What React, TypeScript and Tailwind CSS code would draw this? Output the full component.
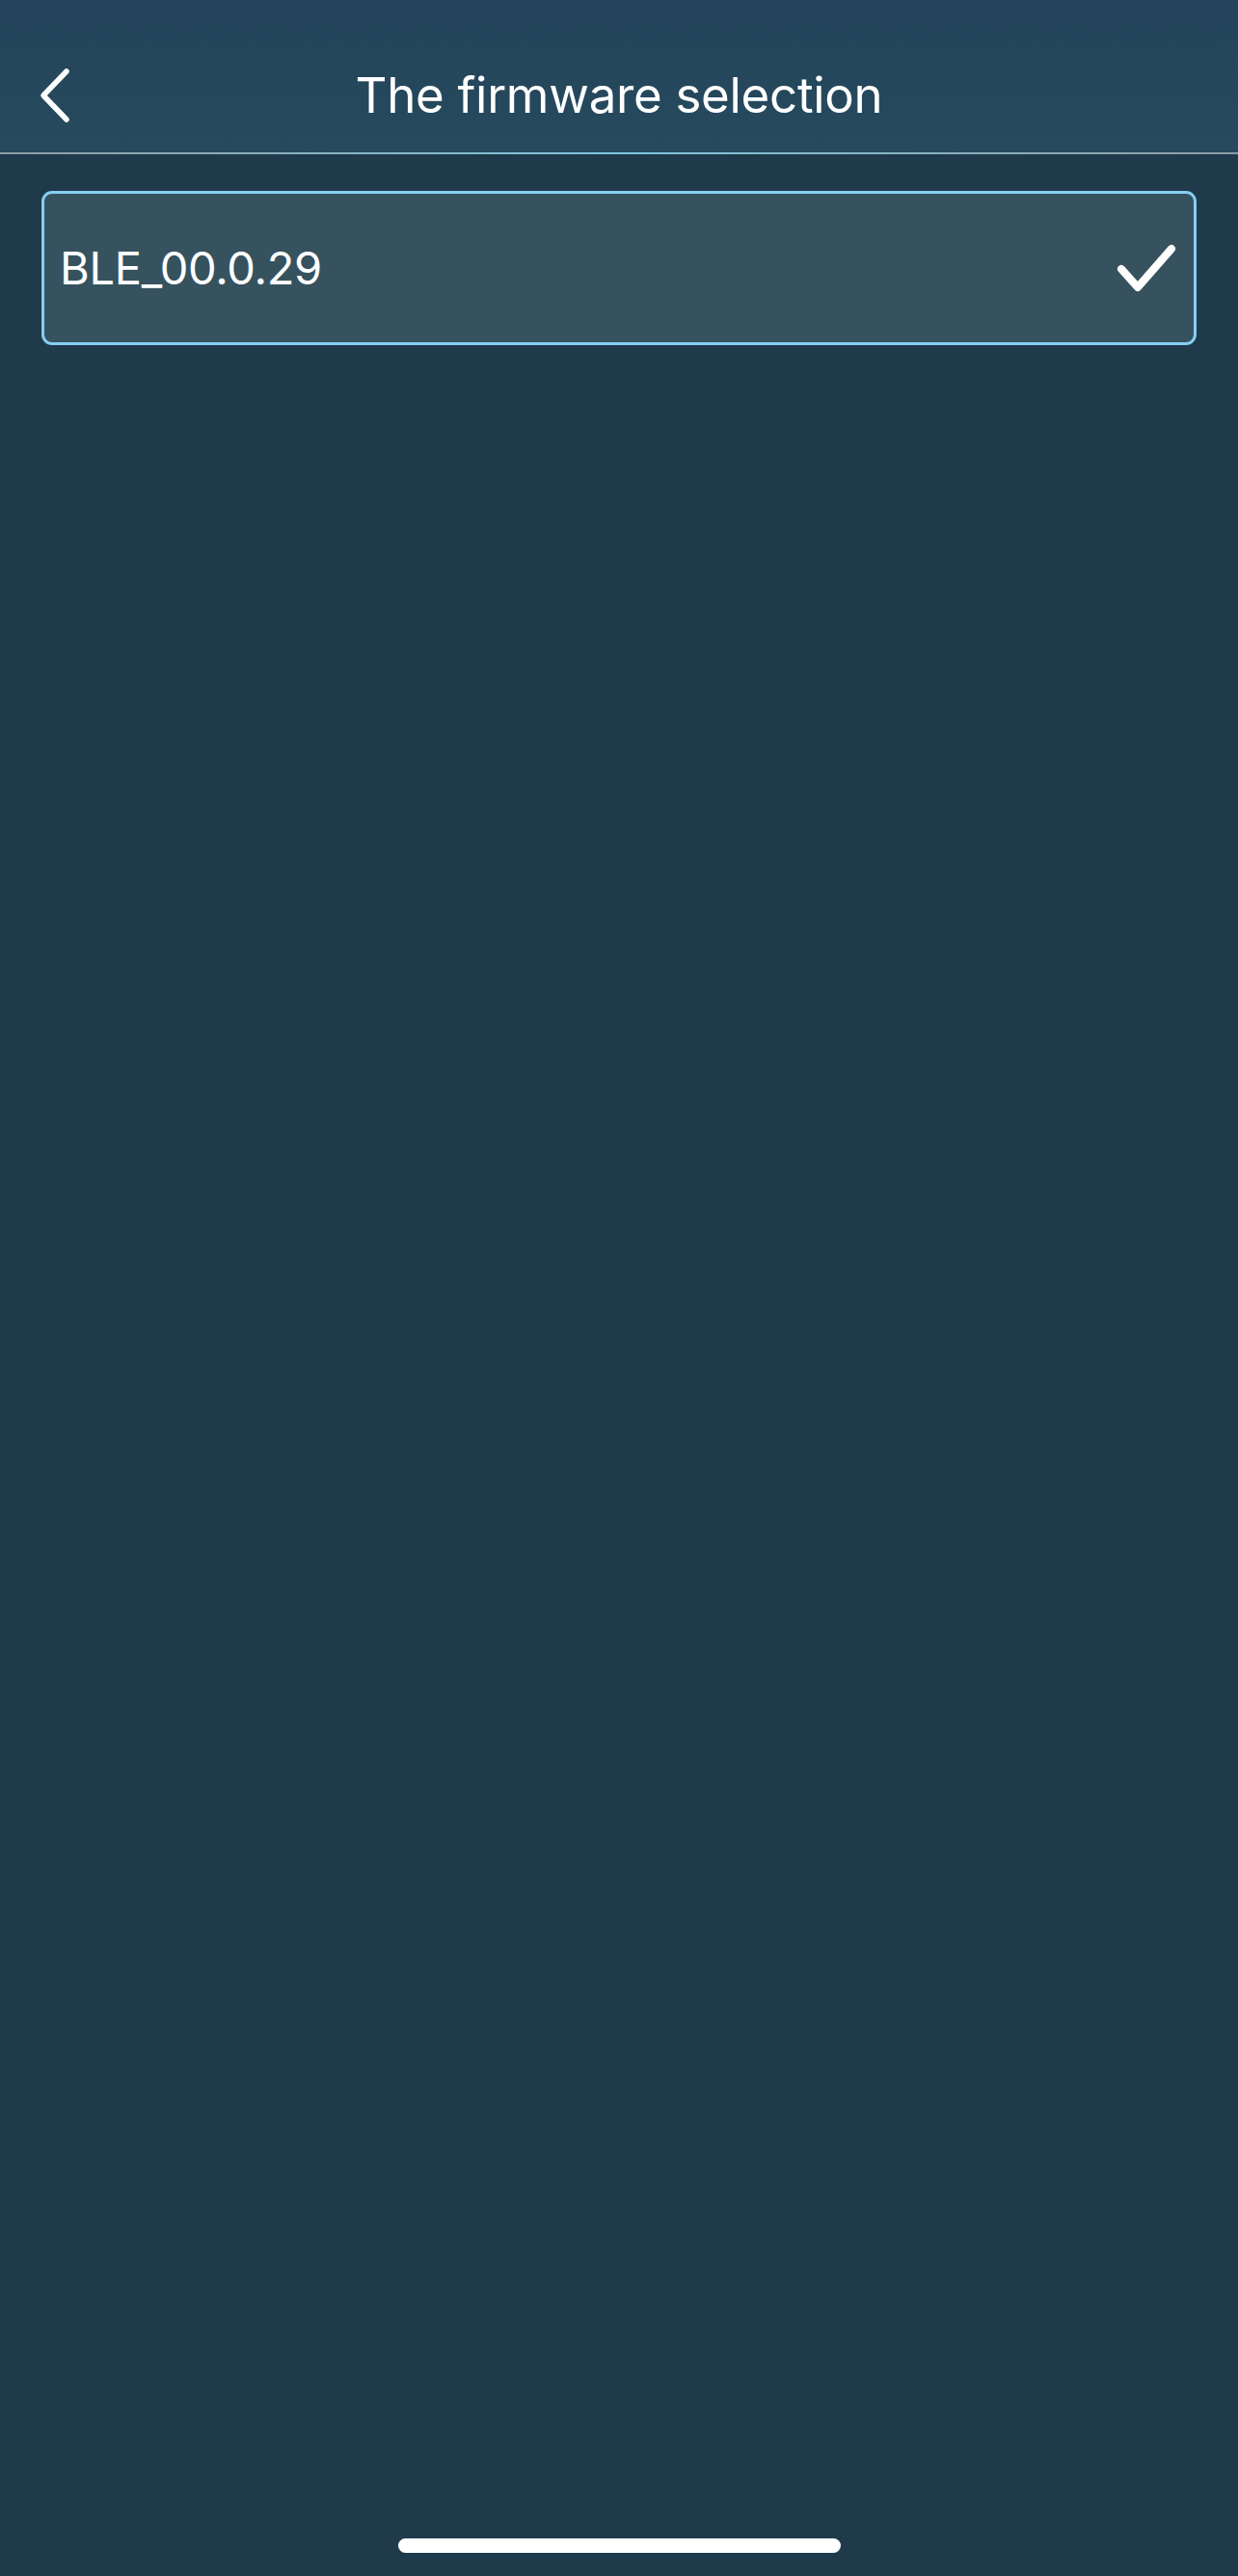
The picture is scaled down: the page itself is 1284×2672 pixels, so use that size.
const FirmwareSelection = () => {
  const firmwares = ["BLE_00.0.29"];
  const selected = "BLE_00.0.29";

  return (
    <div
      className="w-[1284px] h-[2672px] flex flex-col bg-[#1f3a4b] text-white"
      style={{ fontFamily: "Inter, 'Noto Sans', sans-serif" }}
    >
      {/* header */}
      <header className="h-[158px] shrink-0 pt-[40px] bg-gradient-to-b from-[#23445a] to-[#274a5e]">
        <div className="relative h-full flex items-center justify-center">
          <button className="absolute left-[36px] top-1/2 -translate-y-1/2 w-[42px] h-[64px] flex items-center justify-center">
            <svg width="36" height="60" viewBox="0 0 36 60" fill="none">
              <path
                d="M30 5 L6 30 L30 55"
                stroke="white"
                strokeWidth="5.5"
                strokeLinecap="round"
                strokeLinejoin="round"
              />
            </svg>
          </button>
          <h1 className="text-[51px] font-normal tracking-[-0.3px]">
            The firmware selection
          </h1>
        </div>
      </header>
      <div className="h-[2px] shrink-0 bg-gradient-to-r from-[#8e9da3] via-[#7fc7de] to-[#8e9da3]" />

      {/* firmware list */}
      <ul className="flex flex-col gap-4 px-[43px] pt-[38px]">
        {firmwares.map((fw) => (
          <li
            key={fw}
            className="h-[160px] flex items-center justify-between pl-[16px] pr-[18px] rounded-[11px] border-[3px] border-[#87cef0] bg-[#36525f]"
          >
            <span className="text-[47px] tracking-[-0.3px]">{fw}</span>
            {fw === selected && (
              <svg width="62" height="50" viewBox="0 0 62 50" fill="none">
                <path
                  d="M5 26 L22 45 L57 5"
                  stroke="white"
                  strokeWidth="8"
                  strokeLinecap="round"
                  strokeLinejoin="round"
                />
              </svg>
            )}
          </li>
        ))}
      </ul>

      <div className="flex-1" />
      {/* home indicator */}
      <div className="flex justify-center pb-[24px]">
        <div className="w-[459px] h-[15px] rounded-full bg-white" />
      </div>
    </div>
  );
};

export default function App() {
  return <FirmwareSelection />;
}
